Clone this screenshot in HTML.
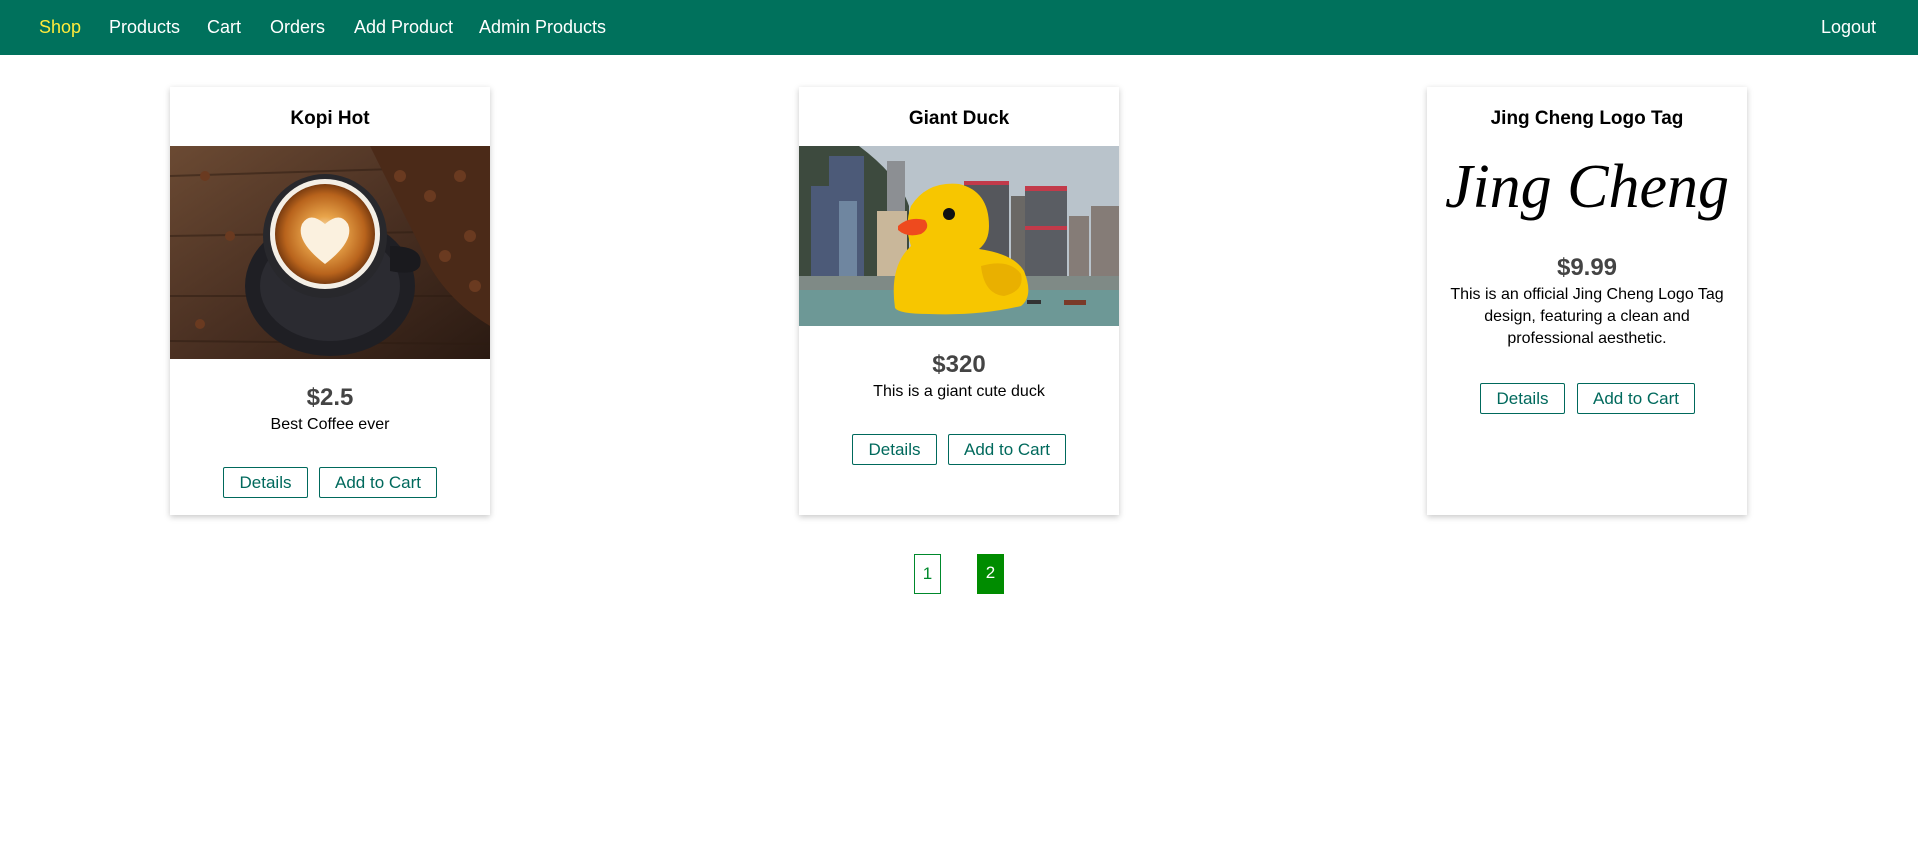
<!DOCTYPE html>
<html><head><meta charset="utf-8"><style>
*{box-sizing:border-box;margin:0;padding:0}
body{width:1918px;height:866px;background:#fff;font-family:"Liberation Sans",sans-serif;position:relative;overflow:hidden;color:#000}
.nav{position:absolute;left:0;top:0;width:1918px;height:55px;background:#00715c}
.nav a{position:absolute;top:16px;font-size:18px;color:#fff;text-decoration:none;line-height:22px}
.card{position:absolute;top:87px;width:320px;height:428px;background:#fff;box-shadow:0 2px 6px rgba(0,0,0,.22)}
.t{position:absolute;left:0;width:100%;text-align:center;font-weight:bold;font-size:19px;top:21px}
.p{position:absolute;left:0;width:100%;text-align:center;font-weight:bold;font-size:24px;color:#444}
.d{position:absolute;left:0;width:100%;text-align:center;font-size:16px;line-height:22px}
.b{position:absolute;height:31px;border:1px solid #00695c;border-radius:2px;color:#00695c;font-size:17px;line-height:29px;text-align:center}
.img{position:absolute;left:0;top:59px}
.pg{position:absolute;top:554px;width:27px;height:40px;font-size:17px;line-height:38px;text-align:center}
</style></head><body>
<div class="nav">
<a style="left:39px;color:#ffeb3b">Shop</a>
<a style="left:109px">Products</a>
<a style="left:207px">Cart</a>
<a style="left:270px">Orders</a>
<a style="left:354px">Add Product</a>
<a style="left:479px">Admin Products</a>
<a style="left:1821px">Logout</a>
</div>

<div class="card" style="left:170px">
<div class="t">Kopi Hot</div>
<svg class="img" width="320" height="213" viewBox="0 0 320 213">
<defs><linearGradient id="w" x1="0" y1="0" x2="1" y2="1"><stop offset="0" stop-color="#6b4a33"/><stop offset=".5" stop-color="#4a3022"/><stop offset="1" stop-color="#2a1a12"/></linearGradient>
<radialGradient id="c" cx=".5" cy=".5" r=".5"><stop offset="0" stop-color="#fff3dc"/><stop offset=".35" stop-color="#e8a44a"/><stop offset=".8" stop-color="#b8631c"/><stop offset="1" stop-color="#7a3c10"/></radialGradient></defs>
<rect width="320" height="213" fill="url(#w)"/>
<g stroke="#2d1c12" stroke-width="2" opacity=".5"><line x1="0" y1="30" x2="320" y2="20"/><line x1="0" y1="90" x2="320" y2="85"/><line x1="0" y1="150" x2="320" y2="150"/><line x1="0" y1="195" x2="320" y2="198"/></g>
<path d="M200 0 L320 0 L320 180 Q270 150 250 100 Q220 40 200 0Z" fill="#4b2a18"/>
<g fill="#6a3a20"><circle cx="230" cy="30" r="6"/><circle cx="260" cy="50" r="6"/><circle cx="290" cy="30" r="6"/><circle cx="300" cy="90" r="6"/><circle cx="275" cy="110" r="6"/><circle cx="305" cy="140" r="6"/><circle cx="60" cy="90" r="5"/><circle cx="35" cy="30" r="5"/><circle cx="40" cy="220" r="5"/><circle cx="30" cy="178" r="5"/></g>
<ellipse cx="160" cy="140" rx="85" ry="70" fill="#1f1f24"/>
<ellipse cx="160" cy="140" rx="70" ry="55" fill="#2b2b31"/>
<path d="M220 100 Q255 100 250 120 Q245 130 220 125Z" fill="#1a1a1e"/>
<circle cx="155" cy="90" r="62" fill="#28282c"/>
<circle cx="155" cy="88" r="55" fill="#f4efe6"/>
<circle cx="155" cy="88" r="50" fill="url(#c)"/>
<path d="M155 118 Q125 95 132 78 Q140 65 155 78 Q170 65 178 78 Q185 95 155 118Z" fill="#fbf1df"/>
</svg>
<div class="p" style="top:297px">$2.5</div>
<div class="d" style="top:327px">Best Coffee ever</div>
<div class="b" style="left:53px;top:380px;width:85px">Details</div>
<div class="b" style="left:149px;top:380px;width:118px">Add to Cart</div>
</div>

<div class="card" style="left:799px">
<div class="t">Giant Duck</div>
<svg class="img" width="320" height="180" viewBox="0 0 320 180">
<rect width="320" height="180" fill="#b9c3cb"/>
<path d="M0 0 L60 0 Q100 30 110 60 L110 140 L0 140Z" fill="#3d4a3e"/>
<g fill="#4c5a78"><rect x="30" y="10" width="35" height="130"/><rect x="12" y="40" width="22" height="100"/></g>
<rect x="88" y="15" width="18" height="120" fill="#8c8f93"/>
<rect x="78" y="65" width="30" height="75" fill="#c9b79a"/>
<rect x="40" y="55" width="18" height="85" fill="#6f86a0"/>
<rect x="165" y="35" width="45" height="110" fill="#55575c"/>
<rect x="165" y="35" width="45" height="4" fill="#c23a4a"/>
<rect x="212" y="50" width="14" height="90" fill="#6a6865"/>
<rect x="226" y="40" width="42" height="105" fill="#5a5d63"/>
<rect x="226" y="40" width="42" height="5" fill="#c23a4a"/>
<rect x="226" y="80" width="42" height="4" fill="#c23a4a"/>
<g fill="#857c77"><rect x="270" y="70" width="20" height="75"/><rect x="292" y="60" width="28" height="85"/></g>
<rect x="0" y="130" width="320" height="14" fill="#7f8a86"/>
<rect x="0" y="144" width="320" height="36" fill="#6d9896"/>
<path d="M96 162 Q90 120 112 100 Q105 80 112 60 Q128 35 160 38 Q190 45 190 80 Q190 95 180 103 Q215 108 225 125 Q235 150 222 160 Q180 170 130 168 Q100 168 96 162Z" fill="#f7c600"/>
<path d="M182 120 Q210 112 222 128 Q226 145 205 150 Q185 148 182 120Z" fill="#e9b000"/>
<path d="M99 80 Q110 70 126 74 Q132 82 122 88 Q108 92 99 84Z" fill="#ee4a1e"/>
<circle cx="150" cy="68" r="6" fill="#111"/>
<rect x="228" y="154" width="14" height="4" fill="#333"/><rect x="265" y="154" width="22" height="5" fill="#7a3a28"/>
</svg>
<div class="p" style="top:264px">$320</div>
<div class="d" style="top:294px">This is a giant cute duck</div>
<div class="b" style="left:53px;top:347px;width:85px">Details</div>
<div class="b" style="left:149px;top:347px;width:118px">Add to Cart</div>
</div>

<div class="card" style="left:1427px">
<div class="t">Jing Cheng Logo Tag</div>
<div style="position:absolute;left:0;width:100%;top:60px;text-align:center;font-family:'Liberation Serif',serif;font-style:italic;font-size:62px;line-height:80px">Jing Cheng</div>
<div class="p" style="top:167px">$9.99</div>
<div class="d" style="top:197px">This is an official Jing Cheng Logo Tag<br>design, featuring a clean and<br>professional aesthetic.</div>
<div class="b" style="left:53px;top:296px;width:85px">Details</div>
<div class="b" style="left:150px;top:296px;width:118px">Add to Cart</div>
</div>

<div class="pg" style="left:914px;border:1px solid #00892c;color:#00892c">1</div>
<div class="pg" style="left:977px;background:#008c00;color:#fff">2</div>
</body></html>
